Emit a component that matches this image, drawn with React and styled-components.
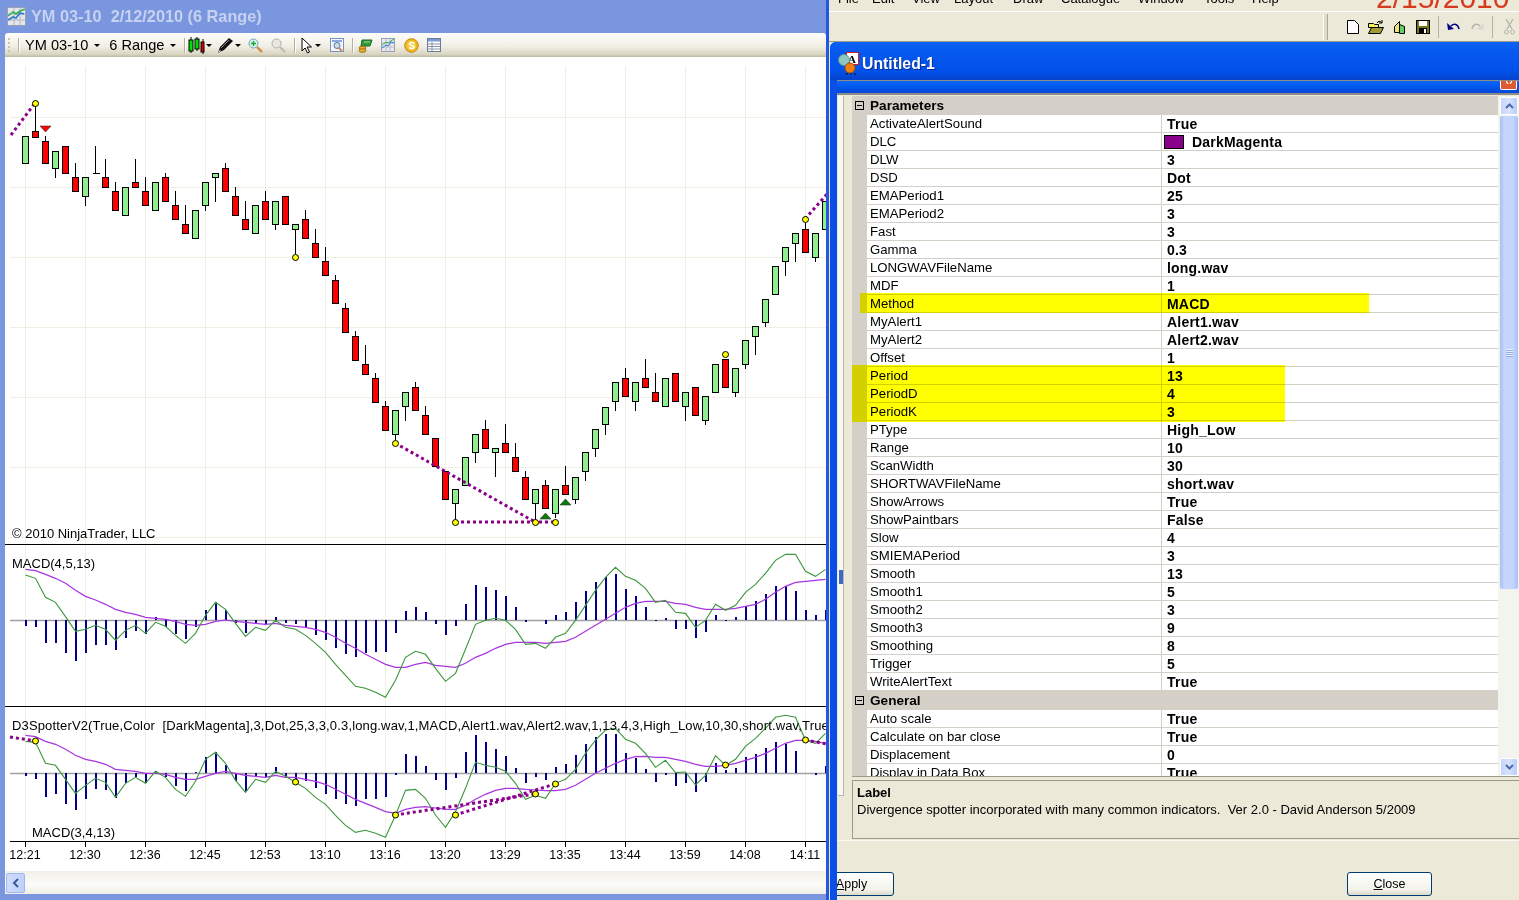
import React from "react";
import styled, { createGlobalStyle } from "styled-components";

// chart numbers were read off the screenshot: x is one bar per 10px
const barX = (i) => 25.5 + 10 * i;

// [top, bottom, high, low, green?]
const candles = [
   [136, 163, 136, 163, 1], [131, 137, 103, 137, 0], [141, 163, 136, 163, 0], [151, 168, 151, 178, 1],
   [146, 173, 146, 173, 0], [177, 191, 163, 191, 0], [177, 196, 177, 206, 1], [173, 173, 146, 173, 0],
   [177, 187, 159, 187, 0], [191, 210, 182, 210, 0], [187, 215, 187, 215, 1], [182, 187, 159, 187, 0],
   [191, 205, 177, 205, 0], [182, 210, 182, 210, 1], [177, 201, 173, 201, 0], [205, 219, 191, 219, 0],
   [224, 233, 205, 233, 0], [210, 238, 210, 238, 1], [182, 205, 182, 211, 1], [173, 177, 173, 202, 1],
   [168, 191, 163, 191, 0], [196, 215, 187, 215, 0], [219, 229, 201, 229, 0], [205, 233, 205, 233, 1],
   [201, 219, 191, 219, 0], [201, 224, 201, 230, 1], [196, 224, 196, 224, 0], [224, 229, 224, 254, 1],
   [219, 238, 210, 238, 0], [243, 257, 229, 257, 0], [261, 275, 247, 275, 0], [280, 303, 275, 303, 0],
   [308, 332, 303, 332, 0], [336, 360, 331, 360, 0], [364, 374, 345, 374, 0], [378, 402, 373, 402, 0],
   [406, 430, 401, 430, 0], [410, 434, 410, 440, 1], [392, 406, 392, 421, 1], [387, 410, 382, 410, 0],
   [415, 434, 406, 434, 0], [438, 466, 438, 466, 0], [471, 499, 471, 499, 0], [489, 503, 489, 520, 1],
   [457, 485, 457, 485, 1], [434, 452, 434, 463, 1], [429, 448, 420, 448, 0], [448, 452, 448, 477, 1],
   [443, 452, 424, 452, 0], [457, 471, 443, 471, 0], [477, 499, 471, 499, 0], [489, 503, 489, 520, 1],
   [485, 508, 480, 508, 0], [489, 513, 489, 518, 1], [485, 494, 466, 494, 0], [477, 499, 477, 504, 1],
   [452, 471, 452, 481, 1], [429, 448, 429, 457, 1], [407, 424, 407, 435, 1], [382, 401, 382, 411, 1],
   [378, 396, 368, 396, 0], [382, 401, 382, 411, 1], [378, 387, 359, 387, 0], [392, 401, 373, 401, 0],
   [378, 406, 378, 406, 1], [373, 401, 373, 401, 0], [392, 406, 392, 421, 1], [387, 415, 387, 415, 0],
   [396, 420, 396, 425, 1], [364, 392, 364, 392, 1], [359, 387, 359, 387, 0], [368, 392, 368, 397, 1],
   [340, 364, 340, 369, 1], [326, 336, 326, 355, 1], [299, 322, 299, 327, 1], [266, 294, 266, 294, 1],
   [247, 261, 247, 276, 1], [233, 243, 233, 262, 1], [229, 252, 223, 252, 0], [233, 257, 233, 262, 1],
   [201, 229, 201, 229, 1],
];

const macdHist = [
   6, 7, 23, 23, 33, 41, 33, 25, 25, 30, 18, 11, 14, -3, 7, 14, 19, 7, -10, -18, -10, 3, 13, 3, 4, -3, 3, 4, 7, 15,
   20, 28, 34, 37, 33, 32, 32, 13, -9, -13, -8, 4, 15, 6, -16, -35, -33, -30, -24, -13, 2, 0, 4, -5, -8, -18, -29,
   -38, -43, -46, -31, -24, -13, 1, -2, 9, 9, 18, 12, -5, 1, -3, -14, -19, -26, -34, -34, -29, -10, -5, -10,
];
const macdFast = [
   105, 115, 172, 187, 230, 274, 268, 256, 268, 301, 271, 256, 280, 247, 259, 286, 310, 280, 226, 187, 208, 250, 289,
   262, 271, 241, 262, 268, 286, 310, 337, 373, 406, 439, 445, 457, 472, 421, 352, 334, 343, 385, 424, 400, 328, 253,
   241, 235, 241, 268, 313, 310, 325, 292, 280, 241, 196, 151, 112, 82, 109, 121, 145, 187, 181, 217, 220, 262, 241,
   193, 211, 196, 157, 133, 100, 61, 43, 43, 94, 109, 88,
];
const macdSlow = [
   88, 92, 103, 115, 130, 151, 169, 180, 193, 208, 217, 223, 232, 235, 238, 244, 253, 256, 253, 244, 240, 244, 247, 250,
   253, 250, 256, 259, 262, 268, 277, 292, 310, 325, 343, 358, 373, 382, 382, 373, 367, 376, 379, 382, 370, 352, 340,
   325, 313, 307, 307, 307, 310, 307, 304, 292, 274, 256, 238, 220, 202, 190, 184, 184, 184, 190, 193, 202, 208, 208,
   208, 205, 199, 193, 178, 157, 139, 127, 124, 121, 118,
];

const spotHist = [
   3, 6, 24, 21, 31, 37, 26, 16, 17, 25, 10, 4, 10, -2, 4, 13, 18, -1, -16, -21, -8, 8, 18, 4, 4, -6, 4, 6, 8, 15, 21,
   26, 31, 33, 26, 26, 24, 2, -19, -17, -7, 7, 17, 5, -21, -38, -31, -24, -17, -5, 10, 4, 7, -6, -9, -18, -29, -36, -39,
   -39, -20, -15, -4, 9, 2, 13, 10, 19, 9, -10, -3, -5, -16, -19, -25, -31, -29, -22, 0, 2, -7,
];
const spotFast = [
   604, 607, 670, 676, 718, 760, 736, 715, 727, 772, 730, 712, 730, 694, 712, 748, 769, 724, 658, 637, 670, 721, 757,
   718, 727, 694, 709, 727, 745, 772, 793, 826, 856, 877, 871, 880, 892, 826, 751, 748, 775, 825, 862, 815, 745, 667,
   676, 682, 694, 730, 778, 766, 775, 730, 718, 688, 640, 600, 570, 565, 598, 610, 640, 682, 661, 698, 696, 735, 706,
   647, 676, 658, 619, 595, 565, 532, 526, 532, 601, 610, 580,
];
const spotSlow = [
   586, 590, 604, 613, 628, 646, 658, 664, 673, 688, 691, 694, 700, 700, 703, 712, 718, 718, 709, 700, 694, 700, 706,
   709, 712, 706, 712, 712, 718, 724, 733, 748, 763, 778, 790, 802, 815, 820, 808, 802, 800, 804, 808, 808, 796, 778,
   763, 751, 745, 745, 748, 750, 752, 752, 748, 736, 718, 700, 685, 670, 658, 650, 649, 652, 652, 658, 664, 673, 679,
   679, 676, 670, 661, 652, 640, 625, 610, 601, 601, 604, 610,
];

const times = ["12:21", "12:30", "12:36", "12:45", "12:53", "13:10", "13:16", "13:20", "13:29", "13:35", "13:44", "13:59", "14:08", "14:11"];

const parameters = [
   ["ActivateAlertSound", "True"], ["DLC", "DarkMagenta", "#8b008b"], ["DLW", "3"], ["DSD", "Dot"], ["EMAPeriod1", "25"],
   ["EMAPeriod2", "3"], ["Fast", "3"], ["Gamma", "0.3"], ["LONGWAVFileName", "long.wav"], ["MDF", "1"], ["Method", "MACD"],
   ["MyAlert1", "Alert1.wav"], ["MyAlert2", "Alert2.wav"], ["Offset", "1"], ["Period", "13"], ["PeriodD", "4"], ["PeriodK", "3"],
   ["PType", "High_Low"], ["Range", "10"], ["ScanWidth", "30"], ["SHORTWAVFileName", "short.wav"], ["ShowArrows", "True"],
   ["ShowPaintbars", "False"], ["Slow", "4"], ["SMIEMAPeriod", "3"], ["Smooth", "13"], ["Smooth1", "5"], ["Smooth2", "3"],
   ["Smooth3", "9"], ["Smoothing", "8"], ["Trigger", "5"], ["WriteAlertText", "True"],
];
const general = [["Auto scale", "True"], ["Calculate on bar close", "True"], ["Displacement", "0"], ["Display in Data Box", "True"]];
const menus = ["File", "Edit", "View", "Layout", "Draw", "Catalogue", "Window", "Tools", "Help"];

const points = (values) => values.map((v, i) => `${barX(i)},${540 + v / 3}`).join(" ");

const VerticalGrid = ({ from, to }) =>
   times.map((t) => times.indexOf(t)).map((i) => (
      <line key={i} x1={barX(i * 6)} x2={barX(i * 6)} y1={from} y2={to} stroke="#f0efe4" />
   ));

const Marker = ({ x, y }) => <circle cx={x} cy={y} r="3" fill="#ffff00" stroke="#000" />;

const DotLine = ({ d }) => <line x1={d[0]} y1={d[1]} x2={d[2]} y2={d[3]} stroke="#8b008b" strokeWidth="3" strokeDasharray="3 3" />;

const Arrow = ({ x, y, up }) => (
   <polygon
      points={up ? `${x - 5},${y + 6} ${x + 6},${y + 6} ${x + 0.5},${y}` : `${x - 5},${y} ${x + 6},${y} ${x + 0.5},${y + 6}`}
      fill={up ? "#0a7a0a" : "#ff0000"}
      stroke="#333"
      strokeWidth="0.6"
   />
);

const Oscillator = ({ top, height, base, hist, fast, slow, children }) => (
   <svg width="821" height={height} viewBox={`5 ${top} 821 ${height}`} style={{ display: "block" }}>
      <VerticalGrid from={top} to={top + height} />
      <line x1="10" x2="826" y1={base + 0.5} y2={base + 0.5} stroke="#a0a0a0" strokeWidth="1.4" />
      {hist.map((v, i) =>
         v === 0 ? null : (
            <rect key={i} x={24.5 + 10 * i} y={v > 0 ? base : base + v} width="2" height={Math.abs(v)} fill="#00008b" shapeRendering="crispEdges" />
         )
      )}
      <polyline points={points(slow)} fill="none" stroke="#a835e0" strokeWidth="1.2" />
      <polyline points={points(fast)} fill="none" stroke="#3c963c" strokeWidth="1.1" />
      {children}
   </svg>
);

const PriceChart = () => (
   <svg width="821" height="487" viewBox="5 57 821 487" style={{ display: "block" }}>
      <VerticalGrid from={66} to={544} />
      {[117, 187, 257, 327, 397, 467, 537].map((y) => (
         <line key={y} x1="10" x2="826" y1={y + 0.5} y2={y + 0.5} stroke="#f0efe4" />
      ))}
      {candles.map(([top, bottom, high, low, up], i) => (
         <g key={i} shapeRendering="crispEdges">
            <line x1={barX(i)} x2={barX(i)} y1={high} y2={low} stroke="#000" />
            {top === bottom ? (
               <line x1={barX(i) - 3} x2={barX(i) + 4} y1={top + 0.5} y2={top + 0.5} stroke="#000" />
            ) : (
               <rect x={barX(i) - 3} y={top + 0.5} width="6" height={bottom - top} fill={up ? "#90ee90" : "#ff0000"} stroke="#000" />
            )}
         </g>
      ))}
      <DotLine d={[11, 135, 35, 103]} />
      <DotLine d={[395, 443, 535, 522]} />
      <DotLine d={[455, 522, 555, 522]} />
      <DotLine d={[805, 219, 828, 193]} />
      <Arrow x={45} y={126} />
      <Arrow x={545} y={513} up />
      <Arrow x={565} y={499} up />
      {[[35, 103], [295, 257], [395, 443], [455, 522], [535, 522], [555, 522], [725, 354], [805, 219]].map(([x, y]) => (
         <Marker key={x} x={x + 0.5} y={y + 0.5} />
      ))}
   </svg>
);

const WindowChartIcon = () => (
   <svg width="19" height="19" viewBox="0 0 19 19">
      <rect x="0.5" y="0.5" width="18" height="18" fill="#e6e6ea" stroke="#9aa0b8" />
      <path d="M1 7h17M1 13h17M7 1v17M13 1v17" stroke="#b0b4c4" />
      <path d="M1 13l5-3 3 1 4-5 4 1" fill="none" stroke="#2a7ad0" strokeWidth="1.6" />
      <path d="M1 9l5-4 3 2 4-3 5-2" fill="none" stroke="#2eb04a" strokeWidth="1.6" />
   </svg>
);

const CandleIcon = () => (
   <svg width="17" height="17" viewBox="0 0 17 17">
      <path d="M3 0v16M9 0v14M15 2v15" stroke="#000" />
      <rect x="1" y="3" width="4" height="11" fill="#00e000" stroke="#000" />
      <rect x="7" y="2" width="4" height="10" fill="#00e000" stroke="#000" />
      <rect x="13" y="5" width="3" height="10" fill="#e00000" stroke="#000" />
   </svg>
);

const PenIcon = () => (
   <svg width="17" height="17" viewBox="0 0 17 17">
      <path d="M1 16l2-6L12 1l4 3-9 9z" fill="#111" />
      <path d="M4 11l8-8" stroke="#888" />
      <path d="M1 16l2-3 1 1z" fill="#fff" />
   </svg>
);

const LensIcon = ({ off, plus }) => (
   <svg width="15" height="15" viewBox="0 0 15 15">
      <path d="M9 9l5 5" stroke={off ? "#bcbcb4" : "#d08a40"} strokeWidth="2.4" />
      <circle cx="5.5" cy="5.5" r="4.5" fill={off ? "#e8e8e2" : "#d6f0ea"} stroke={off ? "#b0b0a8" : "#7aa0b0"} />
      {plus && <path d="M3 5.5h5M5.5 3v5" stroke="#18a838" strokeWidth="1.4" />}
   </svg>
);

const CursorIcon = () => (
   <svg width="12" height="17" viewBox="0 0 12 17">
      <path d="M1 1v13l3-3 2.500 5 2-1-2.500-5h4.500z" fill="#fff" stroke="#000" />
   </svg>
);

const PreviewIcon = () => (
   <svg width="14" height="14" viewBox="0 0 14 14">
      <rect x="0.500" y="0.500" width="13" height="13" fill="#f4f6fc" stroke="#7a90c0" />
      <rect x="2" y="2" width="10" height="2" fill="#8aa8e0" />
      <circle cx="7" cy="7.500" r="3" fill="#cde" stroke="#5a7090" />
      <path d="M9 10l3 3" stroke="#d08a40" strokeWidth="2" />
   </svg>
);

const MoneyIcon = () => (
   <svg width="15" height="15" viewBox="0 0 15 15">
      <path d="M4 2h10l-2 6H3z" fill="#2f9a3a" stroke="#1c6a28" />
      <path d="M6 4h6" stroke="#a0e0a0" />
      <ellipse cx="4.500" cy="10" rx="3.500" ry="1.800" fill="#e8b030" stroke="#a07010" />
      <ellipse cx="4.500" cy="12.500" rx="3.500" ry="1.800" fill="#e8b030" stroke="#a07010" />
   </svg>
);

const MiniChartIcon = () => (
   <svg width="14" height="14" viewBox="0 0 14 14">
      <rect x="0.500" y="0.500" width="13" height="13" fill="#e8e8ee" stroke="#9aa0b8" />
      <path d="M1 5h12M1 9h12M5 1v12M9 1v12" stroke="#bcc0cc" />
      <path d="M1 10l4-3 2 1 3-4 3 1" fill="none" stroke="#2a7ad0" />
      <path d="M1 7l4-3 2 1 3-2 3-2" fill="none" stroke="#2eb04a" />
   </svg>
);

const CoinIcon = () => (
   <svg width="15" height="15" viewBox="0 0 15 15">
      <circle cx="7.500" cy="7.500" r="6.800" fill="#f0b41c" stroke="#c88a10" />
      <circle cx="7.500" cy="7.500" r="4.500" fill="#f8d048" />
      <path d="M10 5.500C9 4 5.500 4 5.500 6s4.500 1 4.500 3-3.500 2-4.500.5" fill="none" stroke="#fff" strokeWidth="1.5" />
   </svg>
);

const TableIcon = () => (
   <svg width="14" height="14" viewBox="0 0 14 14">
      <rect x="0.500" y="0.500" width="13" height="13" fill="#fff" stroke="#6a7a98" />
      <rect x="1" y="1" width="12" height="2.500" fill="#7a9ad8" />
      <path d="M1 6h12M1 8.500h12M1 11h12M5 4v9" stroke="#8a94a8" />
   </svg>
);

const AppIcon = () => (
   <svg width="21" height="23" viewBox="0 0 21 23">
      <rect x="8.500" y="0.500" width="12" height="12" fill="#fff" stroke="#d02020" />
      <text x="10" y="10.500" fontSize="11" fontWeight="700" fontFamily="Liberation Serif, serif" fill="#000">A</text>
      <circle cx="6" cy="8" r="5.500" fill="#8fc8c0" stroke="#5a9a98" />
      <path d="M8 22h10" stroke="#000" strokeDasharray="2 2" />
      <circle cx="12" cy="16" r="5" fill="#f08010" stroke="#a05008" />
   </svg>
);

const NewIcon = () => (
   <svg width="12" height="14" viewBox="0 0 12 14">
      <path d="M0.500 0.500h7l4 4v9h-11z" fill="#fff" stroke="#000" />
   </svg>
);

const OpenIcon = () => (
   <svg width="16" height="14" viewBox="0 0 16 14">
      <path d="M0.500 3.500h5l1 1h4v3h-10z" fill="#f8f060" stroke="#000" />
      <path d="M0.500 13.500l3-6h12l-3 6z" fill="#a09a30" stroke="#000" />
      <path d="M9 3c1-2 3-2 4-1l1 1M14 0v3h-3" fill="none" stroke="#000" />
   </svg>
);

const BookIcon = () => (
   <svg width="11" height="14" viewBox="0 0 11 14">
      <path d="M0.500 6.500l5-5v11h-5z" fill="#f0e080" stroke="#000" />
      <path d="M5.500 4.500l5 2v7h-5z" fill="#60d060" stroke="#000" />
   </svg>
);

const SaveIcon = () => (
   <svg width="14" height="14" viewBox="0 0 14 14">
      <rect x="0.500" y="0.500" width="13" height="13" fill="#7a7420" stroke="#000" />
      <rect x="3" y="1" width="8" height="5" fill="#fff" />
      <rect x="3" y="8" width="8" height="6" fill="#000" />
      <rect x="8" y="9" width="2" height="4" fill="#fff" />
   </svg>
);

const UndoIcon = ({ off }) => (
   <svg width="13" height="9" viewBox="0 0 13 9" style={off ? { transform: "scaleX(-1)" } : undefined}>
      <path d="M4 4c3-3 7-2 8 3" fill="none" stroke={off ? "#b4b4a8" : "#00008b"} strokeWidth="1.500" />
      <path d="M0 1l1 7 6-1z" fill={off ? "#d8d8cc" : "#00008b"} />
   </svg>
);

const CutIcon = () => (
   <svg width="11" height="16" viewBox="0 0 11 16">
      <path d="M2 0l6 10M9 0L3 10" stroke="#b4b4a8" strokeWidth="1.300" />
      <circle cx="2.500" cy="13" r="2" fill="none" stroke="#b4b4a8" />
      <circle cx="8.500" cy="13" r="2" fill="none" stroke="#b4b4a8" />
   </svg>
);

const App = () => (
   <>
      <GlobalStyle />
      <Desktop>
         <ChartWindow>
            <ChartTitle>
               <WindowChartIcon />
               <ChartTitleText>YM 03-10&nbsp; 2/12/2010 (6 Range)</ChartTitleText>
            </ChartTitle>
            <ChartToolbar>
               <Grip />
               <ToolSep $ml={8} />
               <ToolLabel $ml={6}>YM 03-10</ToolLabel>
               <Caret $ml={6} />
               <ToolLabel $ml={9}>6 Range</ToolLabel>
               <Caret $ml={6} />
               <ToolSep $ml={8} />
               <ToolSlot $ml={3}><CandleIcon /></ToolSlot>
               <Caret $ml={1} />
               <ToolSlot $ml={5}><PenIcon /></ToolSlot>
               <Caret $ml={1} />
               <ToolSlot $ml={7}><LensIcon plus /></ToolSlot>
               <ToolSlot $ml={8}><LensIcon off /></ToolSlot>
               <ToolSep $ml={8} />
               <ToolSlot $ml={6}><CursorIcon /></ToolSlot>
               <Caret $ml={2} />
               <ToolSlot $ml={9}><PreviewIcon /></ToolSlot>
               <ToolSep $ml={8} />
               <ToolSlot $ml={5}><MoneyIcon /></ToolSlot>
               <ToolSlot $ml={8}><MiniChartIcon /></ToolSlot>
               <ToolSlot $ml={9}><CoinIcon /></ToolSlot>
               <ToolSlot $ml={8}><TableIcon /></ToolSlot>
            </ChartToolbar>

            <ChartArea>
               <Pane $h={487}>
                  <PriceChart />
                  <ChartLabel $x={7} $y={469}>© 2010 NinjaTrader, LLC</ChartLabel>
               </Pane>
               <Pane $h={162} $ruled>
                  <Oscillator top={545} height={161} base={620} hist={macdHist} fast={macdFast} slow={macdSlow} />
                  <ChartLabel $x={7} $y={11}>MACD(4,5,13)</ChartLabel>
               </Pane>
               <Pane $h={135} $ruled>
                  <Oscillator top={707} height={134} base={773} hist={spotHist} fast={spotFast} slow={spotSlow}>
                     <DotLine d={[10, 737, 36, 741]} />
                     <DotLine d={[395, 815, 535, 794]} />
                     <DotLine d={[455, 815, 555, 784]} />
                     <DotLine d={[805, 740, 827, 744]} />
                     {[[35, 741], [295, 782], [395, 815], [455, 815], [535, 794], [555, 784], [725, 765], [805, 740]].map(([x, y]) => (
                        <Marker key={x} x={x + 0.5} y={y} />
                     ))}
                  </Oscillator>
                  <ChartLabel $x={7} $y={11} $wide>
                     D3SpotterV2(True,Color&nbsp; [DarkMagenta],3,Dot,25,3,3,0.3,long.wav,1,MACD,Alert1.wav,Alert2.wav,1,13,4,3,High_Low,10,30,short.wav,True
                  </ChartLabel>
                  <ChartLabel $x={27} $y={118}>MACD(3,4,13)</ChartLabel>
               </Pane>
               <TimeAxis>
                  {times.map((t) => (
                     <TimeTick key={t}>{t}</TimeTick>
                  ))}
               </TimeAxis>
            </ChartArea>

            <HScroll>
               <HScrollButton>
                  <svg width="8" height="10" viewBox="0 0 8 10">
                     <path d="M6 1L2 5l4 4" fill="none" stroke="#3a5aa0" strokeWidth="2" />
                  </svg>
               </HScrollButton>
            </HScroll>
         </ChartWindow>

         <EditorSide>
            <MenuBar>
               {menus.map((label) => (
                  <MenuItem key={label}>{label}</MenuItem>
               ))}
            </MenuBar>
            <DateStamp>2/15/2010</DateStamp>
            <MainToolbar>
               <BarGrip />
               <ToolSlot $ml={19}><NewIcon /></ToolSlot>
               <ToolSlot $ml={9}><OpenIcon /></ToolSlot>
               <ToolSlot $ml={10}><BookIcon /></ToolSlot>
               <ToolSlot $ml={11}><SaveIcon /></ToolSlot>
               <MainSep $ml={8} />
               <ToolSlot $ml={8}><UndoIcon /></ToolSlot>
               <ToolSlot $ml={11}><UndoIcon off /></ToolSlot>
               <MainSep $ml={8} />
               <ToolSlot $ml={11}><CutIcon /></ToolSlot>
            </MainToolbar>

            <EditorWindow>
               <EditorTitle>
                  <AppIcon />
                  <EditorTitleText>Untitled-1</EditorTitleText>
               </EditorTitle>
               <Client>
                  <ChildCaption>
                     <CloseStub>
                        <svg width="6" height="3" viewBox="0 0 6 3">
                           <path d="M0 0l2 3M6 0L4 3" stroke="#fff" strokeWidth="1.300" />
                        </svg>
                     </CloseStub>
                  </ChildCaption>
                  <ClientBody>
                     <SideStrip>
                        <SideTab />
                     </SideStrip>
                     <DialogColumn>
                        <GridWrap>
                           <PropGrid>
                              <GroupRow title="Parameters" />
                              {parameters.map(([name, value, swatch]) => (
                                 <PropRow key={name}>
                                    <PropName>{name}</PropName>
                                    <PropValue>
                                       {swatch && <Swatch $color={swatch} />}
                                       {value}
                                    </PropValue>
                                 </PropRow>
                              ))}
                              <GroupRow title="General" />
                              {general.map(([name, value]) => (
                                 <PropRow key={name}>
                                    <PropName>{name}</PropName>
                                    <PropValue>{value}</PropValue>
                                 </PropRow>
                              ))}
                              <Highlight $top={197} $left={8} $w={509} $h={20} />
                              <Highlight $top={269} $left={0} $w={433} $h={57} />
                           </PropGrid>
                           <VScroll>
                              <VScrollButton>
                                 <svg width="9" height="6" viewBox="0 0 9 6">
                                    <path d="M1 5l3.500-3.500L8 5" fill="none" stroke="#4a6ab0" strokeWidth="2" />
                                 </svg>
                              </VScrollButton>
                              <VScrollThumb>
                                 <ThumbGrip />
                              </VScrollThumb>
                              <VScrollTrack />
                              <VScrollButton>
                                 <svg width="9" height="6" viewBox="0 0 9 6">
                                    <path d="M1 1l3.500 3.500L8 1" fill="none" stroke="#4a6ab0" strokeWidth="2" />
                                 </svg>
                              </VScrollButton>
                           </VScroll>
                        </GridWrap>
                        <HelpBox>
                           <HelpTitle>Label</HelpTitle>
                           <HelpText>Divergence spotter incorporated with many common indicators.&nbsp; Ver 2.0 - David Anderson 5/2009</HelpText>
                        </HelpBox>
                     </DialogColumn>
                  </ClientBody>
                  <DialogFooter>
                     <DialogButton $clipped>
                        <u>A</u>pply
                     </DialogButton>
                     <DialogButton>
                        <u>C</u>lose
                     </DialogButton>
                  </DialogFooter>
               </Client>
            </EditorWindow>
         </EditorSide>
      </Desktop>
   </>
);

const GroupRow = ({ title }) => (
   <GroupHead>
      <Expander />
      {title}
   </GroupHead>
);

const GlobalStyle = createGlobalStyle`
   html, body {
      margin: 0;
      padding: 0;
      background: #ece9d8;
      overflow: hidden;
   }
   * {
      box-sizing: border-box;
   }
`;

const Desktop = styled.div`
   display: flex;
   width: 1519px;
   height: 900px;
   overflow: hidden;
   font-family: "Liberation Sans", Arial, sans-serif;
   color: #000;
`;

const ChartWindow = styled.div`
   display: flex;
   flex-direction: column;
   width: 829px;
   height: 900px;
   flex: none;
   background: #7a96df;
   padding: 0 0 6px 5px;
   border-right: 3px solid #2358e4;
`;

const ChartTitle = styled.div`
   display: flex;
   align-items: center;
   gap: 5px;
   height: 33px;
   margin-left: -3px;
   padding-left: 5px;
`;

const ChartTitleText = styled.span`
   font-size: 16.3px;
   font-weight: 700;
   color: #c6d2f0;
   white-space: nowrap;
`;

const ChartToolbar = styled.div`
   display: flex;
   align-items: center;
   height: 24px;
   padding-left: 3px;
   border-radius: 3px 3px 0 0;
   background: linear-gradient(#fdfdfb, #f1efe4 55%, #d9d6c3 88%, #bdb9a2);
`;

const Grip = styled.span`
   width: 2px;
   height: 15px;
   background: repeating-linear-gradient(#c8c5b4 0 2px, transparent 2px 4px);
`;

const ToolSep = styled.span`
   width: 1px;
   height: 15px;
   margin-left: ${(p) => p.$ml}px;
   background: #b4b1a0;
   box-shadow: 1px 0 #fff;
`;

const ToolLabel = styled.span`
   margin-left: ${(p) => p.$ml}px;
   font-size: 14.6px;
   white-space: nowrap;
`;

const Caret = styled.span`
   width: 0;
   height: 0;
   margin-left: ${(p) => p.$ml}px;
   border-left: 3px solid transparent;
   border-right: 3px solid transparent;
   border-top: 3px solid #000;
`;

const ToolSlot = styled.span`
   display: flex;
   margin-left: ${(p) => p.$ml}px;
`;

const ChartArea = styled.div`
   display: flex;
   flex-direction: column;
   height: 814px;
   flex: none;
   background: #fff;
`;

const Pane = styled.div`
   position: relative;
   height: ${(p) => p.$h}px;
   flex: none;
   overflow: hidden;
   border-top: ${(p) => (p.$ruled ? "1px solid #000" : "none")};
`;

const ChartLabel = styled.span`
   position: absolute;
   left: ${(p) => p.$x}px;
   top: ${(p) => p.$y}px;
   font-size: 13px;
   line-height: 15px;
   letter-spacing: ${(p) => (p.$wide ? 0.15 : 0)}px;
   white-space: nowrap;
`;

const TimeAxis = styled.div`
   display: grid;
   grid-template-columns: repeat(14, 60px);
   height: 30px;
   margin-left: -10px;
   border-top: 1px solid #000;
   clip-path: inset(0 0 0 15px);
`;

const TimeTick = styled.span`
   position: relative;
   padding-top: 6px;
   text-align: center;
   font-size: 12.5px;
   line-height: 15px;
   &::before {
      content: "";
      position: absolute;
      left: 30px;
      top: 0;
      width: 1px;
      height: 5px;
      background: #000;
   }
`;

const HScroll = styled.div`
   display: flex;
   flex: 1;
   align-items: center;
   padding-left: 1px;
   background: linear-gradient(#f1f0e8, #fbfbf8 60%, #eeeee6);
`;

const HScrollButton = styled.span`
   display: flex;
   align-items: center;
   justify-content: center;
   width: 19px;
   height: 20px;
   border: 1px solid #9db8ec;
   border-radius: 2px;
   background: linear-gradient(90deg, #cfdcfb, #c0d2fb);
`;

const EditorSide = styled.div`
   position: relative;
   display: flex;
   flex-direction: column;
   flex: 1;
   min-width: 0;
   background: #ece9d8;
`;

// the top of the menu is cut by the edge of the screenshot
const MenuBar = styled.div`
   display: grid;
   grid-template-columns: 34px 40px 42px 59px 48px 77px 66px 48px auto;
   align-items: start;
   height: 12px;
   flex: none;
   padding-left: 9px;
   overflow: hidden;
   border-bottom: 1px solid #fff;
`;

const MenuItem = styled.span`
   margin-top: -9px;
   font-size: 13px;
   line-height: 15px;
   white-space: nowrap;
`;

const DateStamp = styled.div`
   position: absolute;
   top: -19px;
   left: 547px;
   font-size: 30px;
   line-height: 33px;
   color: #d83a20;
   white-space: nowrap;
`;

const MainToolbar = styled.div`
   display: flex;
   align-items: center;
   height: 30px;
   flex: none;
   padding-left: 494px;
   border-bottom: 1px solid #9d9a88;
`;

const BarGrip = styled.span`
   width: 5px;
   height: 26px;
   border-left: 1px solid #fff;
   border-right: 1px solid #aca899;
   background: #dedbc8;
`;

const MainSep = styled.span`
   width: 1px;
   height: 22px;
   margin-left: ${(p) => p.$ml}px;
   background: #b4b1a0;
`;

const EditorWindow = styled.div`
   display: flex;
   flex-direction: column;
   flex: 1;
   min-height: 0;
   margin-left: 1px;
   overflow: hidden;
   background: #0a4ee6;
   border-radius: 6px 0 0 0;
`;

const EditorTitle = styled.div`
   display: flex;
   align-items: center;
   gap: 3px;
   height: 38px;
   flex: none;
   padding: 5px 0 0 8px;
   background: linear-gradient(#0a62f4, #0557ee 30%, #0052ea 75%, #0542cc);
`;

const EditorTitleText = styled.span`
   font-size: 15.8px;
   font-weight: 700;
   color: #fff;
   text-shadow: 1px 1px #0a2a90;
`;

const Client = styled.div`
   display: flex;
   flex-direction: column;
   flex: 1;
   min-height: 0;
   margin-left: 7px;
   overflow: hidden;
   border-top: 1px solid #8c8c88;
   background: #ece9d8;
`;

const ChildCaption = styled.div`
   display: flex;
   justify-content: flex-end;
   height: 14px;
   flex: none;
   padding-right: 2px;
   border-bottom: 2px solid #8c8c88;
   background: linear-gradient(#0a66f6, #0055ea 55%, #0448d8);
`;

const CloseStub = styled.span`
   display: flex;
   justify-content: center;
   width: 17px;
   height: 9px;
   border-radius: 0 0 2px 2px;
   border: 1px solid #fff;
   border-top: none;
   background: #e05a30;
`;

const ClientBody = styled.div`
   display: flex;
   height: 746px;
   flex: none;
   border-bottom: 1px solid #f8f8f2;
`;

const SideStrip = styled.div`
   position: relative;
   width: 6px;
   height: 700px;
   flex: none;
   margin: 1px 8px 0 1px;
   background: #f8f8f4;
   border-right: 1px solid #b8b8a8;
   border-bottom: 1px solid #b8b8a8;
`;

const SideTab = styled.span`
   position: absolute;
   top: 474px;
   left: 1px;
   width: 4px;
   height: 14px;
   background: #3a6ac8;
`;

const DialogColumn = styled.div`
   display: flex;
   flex: 1;
   min-width: 0;
   flex-direction: column;
`;

const GridWrap = styled.div`
   display: flex;
   height: 681px;
   margin-top: 1px;
   flex: none;
   border-bottom: 1px solid #9d9a88;
`;

const PropGrid = styled.div`
   position: relative;
   width: 646px;
   flex: none;
   overflow: hidden;
   background: #fff;
   font-size: 13.2px;
`;

const GroupHead = styled.div`
   display: flex;
   align-items: center;
   height: 19px;
   padding-left: 3px;
   background: #d4d0c8;
   font-size: 13.6px;
   font-weight: 700;
`;

const Expander = styled.span`
   position: relative;
   width: 9px;
   height: 9px;
   margin-right: 6px;
   border: 1px solid #000;
   &::after {
      content: "";
      position: absolute;
      left: 1px;
      top: 3px;
      width: 5px;
      height: 1px;
      background: #000;
   }
`;

const PropRow = styled.div`
   display: grid;
   grid-template-columns: 311px 1fr;
   height: 18px;
   line-height: 18px;
   margin-left: 15px;
   border-bottom: 1px solid #d4d0c8;
   box-shadow: -15px 0 #d4d0c8;
`;

const PropName = styled.div`
   padding-left: 3px;
   border-right: 1px solid #d4d0c8;
   white-space: nowrap;
   margin-right: 16px;
`;

const PropValue = styled.div`
   display: flex;
   align-items: center;
   margin-left: -16px;
   padding: 0 0 1px 5px;
   font-size: 14px;
   letter-spacing: 0.2px;
   font-weight: 700;
   white-space: nowrap;
`;

const Swatch = styled.span`
   width: 20px;
   height: 14px;
   margin: 0 8px 0 -3px;
   border: 1px solid #000;
   background: ${(p) => p.$color};
`;

// marker pen strokes somebody put over the screenshot
const Highlight = styled.span`
   position: absolute;
   top: ${(p) => p.$top}px;
   left: ${(p) => p.$left}px;
   width: ${(p) => p.$w}px;
   height: ${(p) => p.$h}px;
   background: #ffff00;
   mix-blend-mode: multiply;
`;

const VScroll = styled.div`
   display: flex;
   flex-direction: column;
   flex: 1;
   gap: 1px;
   padding: 1px 1px 0 2px;
   background: #f4f4ee;
`;

const VScrollButton = styled.span`
   display: flex;
   align-items: center;
   justify-content: center;
   height: 18px;
   flex: none;
   border: 1px solid #fff;
   border-radius: 2px;
   background: linear-gradient(90deg, #c4d4fb, #d8e3fd 50%, #b8ccf8);
`;

const VScrollThumb = styled.span`
   display: flex;
   align-items: center;
   justify-content: center;
   height: 473px;
   flex: none;
   border-radius: 2px;
   background: linear-gradient(90deg, #a8c0f0, #c6d6fc 25%, #c4d6fd 70%, #a8c2f6);
`;

const ThumbGrip = styled.span`
   width: 7px;
   height: 8px;
   background: repeating-linear-gradient(#eef3ff 0 1px, #8fabe8 1px 2px);
`;

const VScrollTrack = styled.span`
   flex: 1;
`;

const HelpBox = styled.div`
   height: 59px;
   margin-top: 3px;
   padding: 3px 4px;
   border: 1px solid #9d9a88;
   border-right: none;
   font-size: 13px;
   line-height: 17px;
`;

const HelpTitle = styled.div`
   font-weight: 700;
`;

const HelpText = styled.div`
   white-space: nowrap;
`;

const DialogFooter = styled.div`
   display: flex;
   justify-content: space-between;
   padding: 31px 87px 0 0;
`;

const DialogButton = styled.button`
   width: 85px;
   height: 24px;
   margin-left: ${(p) => (p.$clipped ? -28 : 0)}px;
   padding: 0;
   border: 1px solid #003c74;
   border-radius: 3px;
   background: linear-gradient(#ffffff, #f3f2ea 75%, #dcd8ca);
   font-family: inherit;
   font-size: 12.5px;
   color: #000;
`;

export default App;
